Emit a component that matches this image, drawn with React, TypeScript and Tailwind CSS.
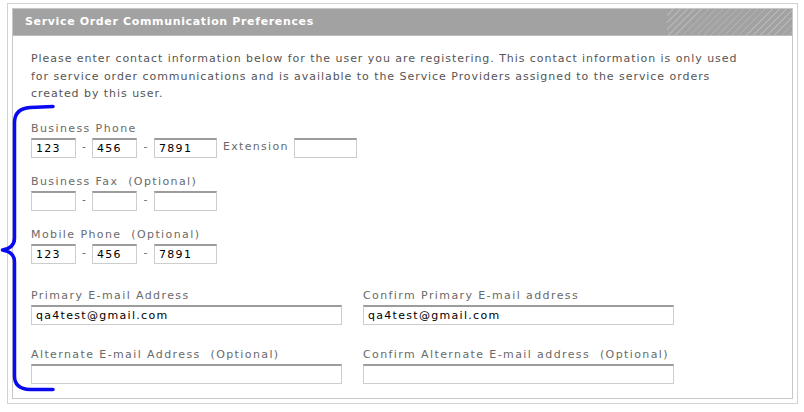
const Box = ({ w, value = "" }: { w: string; value?: string }) => (
  <div
    className={`${w} h-[20px] border border-[#cdcdcd] border-t-2 border-t-[#9c9c9c] bg-white pl-[4px] text-[11px] leading-[17px] text-black tracking-[1.3px]`}
  >
    {value}
  </div>
);

const Label = ({ children }: { children: React.ReactNode }) => (
  <div className="h-[16px] leading-[16px] mb-[1px] text-[11px] text-[#6a6a6a] tracking-[1.4px] whitespace-pre">
    {children}
  </div>
);

const Dash = ({ w }: { w: string }) => (
  <div className={`${w} text-center text-[11px] text-[#6a6a6a]`}>-</div>
);

const PhoneRow = ({ a = "", b = "", c = "" }: { a?: string; b?: string; c?: string }) => (
  <>
    <Box w="w-[45px]" value={a} />
    <Dash w="w-[16px]" />
    <Box w="w-[45px]" value={b} />
    <Dash w="w-[17px]" />
    <Box w="w-[63px]" value={c} />
  </>
);

export default function App() {
  return (
    <div className="relative w-[804px] h-[412px] bg-white font-['DejaVu_Sans',sans-serif]">
      <div className="ml-[7px] pt-[3px]">
        <div className="w-[791px] h-[401px] border border-[#d2d2d2] p-[4px]">
          <div className="h-full border border-[#c8c8c8] bg-white">
            <div className="flex h-[27px] bg-[#a2a2a2] border-b border-[#bdbdbd]">
              <div className="flex-1 pl-[12px] text-[11px] font-bold leading-[26px] text-white tracking-[0.65px]">
                Service Order Communication Preferences
              </div>
              <div className="w-[125px] bg-[repeating-linear-gradient(135deg,#a2a2a2_0px,#a2a2a2_4px,#b4b4b4_4px,#b4b4b4_5px)]" />
            </div>

            <div className="pl-[18px] pt-[14px]">
              <p className="whitespace-nowrap text-[11px] leading-[17.5px] text-[#555] tracking-[0.95px]">
                Please enter contact information below for the user you are registering. This contact information is only used
                <br />
                for service order communications and is available to the Service Providers assigned to the service orders
                <br />
                created by this user.
              </p>

              <div className="mt-[18px]">
                <Label>Business Phone</Label>
                <div className="flex items-center">
                  <PhoneRow a="123" b="456" c="7891" />
                  <div className="ml-[6px] mr-[5px] text-[11px] text-[#6a6a6a] tracking-[1.3px]">Extension</div>
                  <Box w="w-[63px]" />
                </div>
              </div>

              <div className="mt-[16px]">
                <Label>Business Fax  (Optional)</Label>
                <div className="flex items-center">
                  <PhoneRow />
                </div>
              </div>

              <div className="mt-[16px]">
                <Label>Mobile Phone  (Optional)</Label>
                <div className="flex items-center">
                  <PhoneRow a="123" b="456" c="7891" />
                </div>
              </div>

              <div className="mt-[24px] flex gap-[21px]">
                <div>
                  <Label>Primary E-mail Address</Label>
                  <Box w="w-[311px]" value="qa4test@gmail.com" />
                </div>
                <div>
                  <Label>Confirm Primary E-mail address</Label>
                  <Box w="w-[311px]" value="qa4test@gmail.com" />
                </div>
              </div>

              <div className="mt-[22px] flex gap-[21px]">
                <div>
                  <Label>Alternate E-mail Address  (Optional)</Label>
                  <Box w="w-[311px]" />
                </div>
                <div>
                  <Label>Confirm Alternate E-mail address  (Optional)</Label>
                  <Box w="w-[311px]" />
                </div>
              </div>
            </div>
          </div>
        </div>
      </div>

      <svg className="absolute left-0 top-0" width="60" height="412" viewBox="0 0 60 412" fill="none">
        <path
          d="M53 106.5 L30 107.5 Q15 108.5 14.5 122 L14.5 238 Q14.5 248 2.5 250 Q14.5 252 14.5 262 L14.5 376 Q14.5 389 30 389.5 L53 389.5"
          stroke="#0a0af0"
          strokeWidth="3.5"
          strokeLinecap="round"
          strokeLinejoin="round"
        />
      </svg>
    </div>
  );
}
